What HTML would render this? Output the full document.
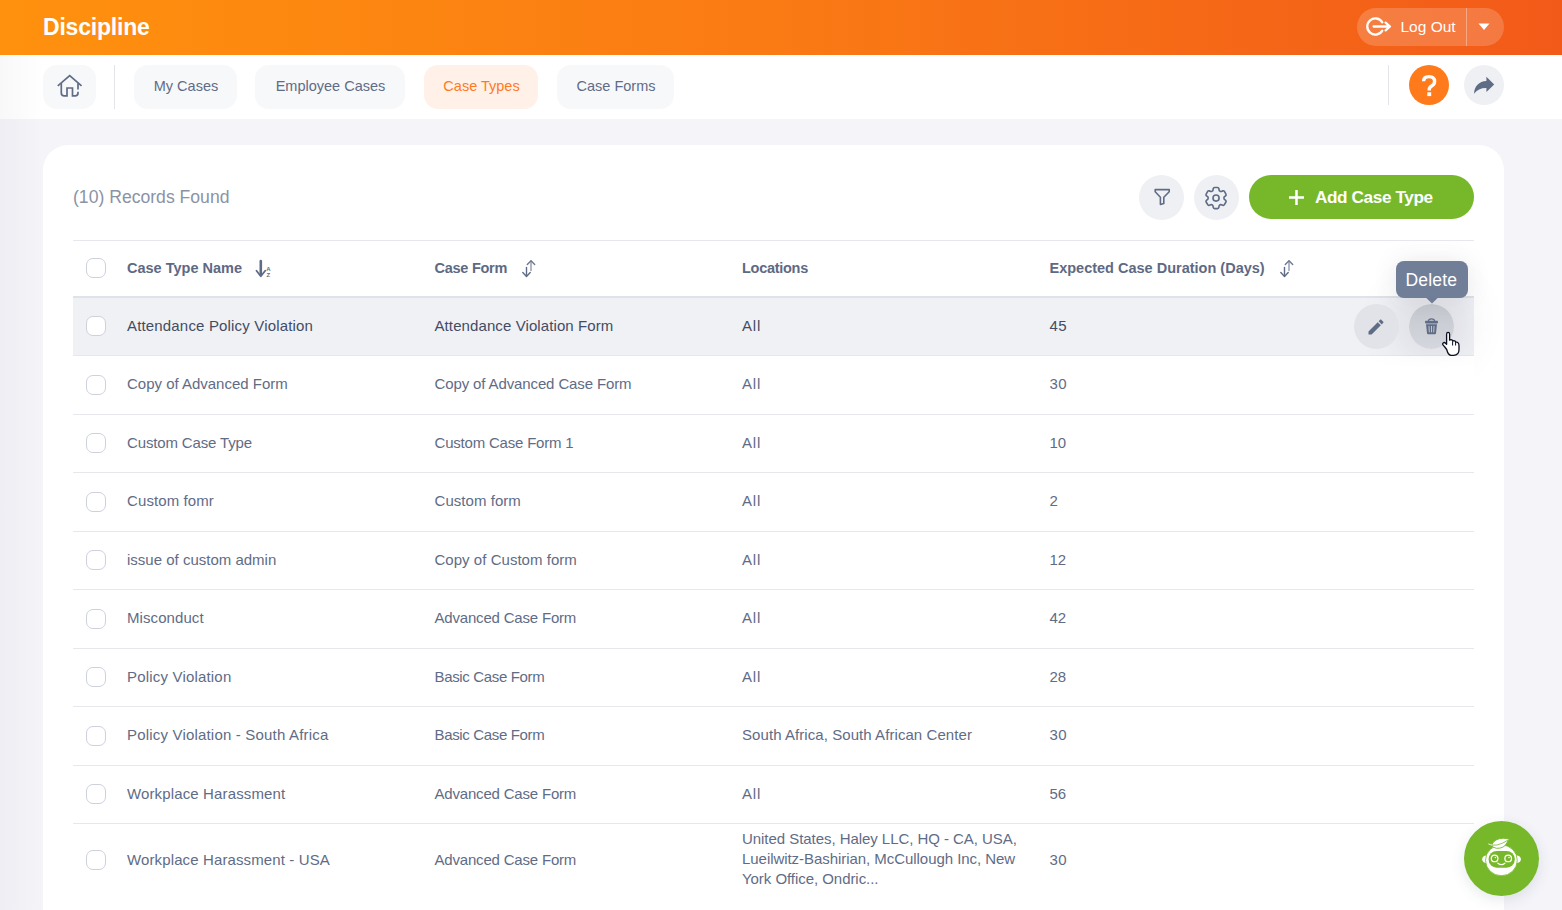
<!DOCTYPE html>
<html><head><meta charset="utf-8">
<style>
*{box-sizing:border-box;margin:0;padding:0}
html,body{width:1562px;height:910px;overflow:hidden}
body{background:#F4F4F9;font-family:"Liberation Sans",sans-serif;position:relative;color:#5F6C86}
.a{position:absolute}
#hdr{left:0;top:0;width:1562px;height:55px;background:linear-gradient(90deg,#FF910E 0%,#FA7A14 50%,#F25A19 100%)}
#title{left:43px;top:13px;font-size:23px;font-weight:bold;color:#fff;line-height:28px;letter-spacing:-0.2px}
#logout{left:1357px;top:8px;width:147px;height:38px;border-radius:19px;background:rgba(255,255,255,0.18)}
#nav{left:0;top:55px;width:1562px;height:64px;background:#fff}
.tab{top:65px;height:44px;border-radius:14px;background:#F7F8FA;font-size:14.5px;line-height:42px;text-indent:1px;color:#5F6C86;text-align:center}
.sep{width:1px;background:#E3E5EA}
.circ{border-radius:50%}
#card{left:43px;top:145px;width:1461px;height:800px;background:#fff;border-radius:25px}
.t{font-size:15px;line-height:20px;white-space:nowrap;letter-spacing:0.15px}
.h{font-weight:bold;color:#5E6983;letter-spacing:0}
.cb{width:20px;height:20px;border:1px solid #CDD1DC;border-radius:7px;background:#fff}
.rl{left:73px;width:1401px;height:1px;background:#E6E8EE}
</style></head><body>
<div id="hdr" class="a">
  <div id="title" class="a">Discipline</div>
  <div id="logout" class="a"></div>
  <div class="a" style="left:1466px;top:8px;width:1px;height:38px;background:rgba(255,255,255,0.35)"></div>
  <svg class="a" style="left:1360px;top:10px" width="40" height="34" viewBox="1360 10 40 34">
    <path d="M1382.3,22.3 A8.1,8.1 0 1 0 1382.3,30.7" fill="none" stroke="#fff" stroke-width="2.3" stroke-linecap="round"/>
    <path d="M1373.6,26.5 H1389.8 M1385.6,22.6 L1390,26.5 L1385.6,30.4" fill="none" stroke="#fff" stroke-width="2.3" stroke-linecap="round" stroke-linejoin="round"/>
  </svg>
  <div class="a" style="left:1400.5px;top:16.6px;font-size:15.5px;line-height:20px;color:#fff;white-space:nowrap">Log Out</div>
  <svg class="a" style="left:1476px;top:20px" width="16" height="12" viewBox="1476 20 16 12"><path d="M1478.5,23.5 H1489.5 L1484,30 Z" fill="#fff"/></svg>
</div>
<div id="nav" class="a"></div>
<div class="a" style="left:0;top:55px;width:44px;height:855px;background:linear-gradient(90deg,rgba(40,40,70,0.03),rgba(40,40,70,0) 100%)"></div>
<div class="a tab" style="left:43px;width:53px"></div>
<div class="a sep" style="left:114px;top:65px;height:44px"></div>
<div class="a tab" style="left:134px;width:103px">My Cases</div>
<div class="a tab" style="left:255px;width:150px">Employee Cases</div>
<div class="a tab" style="left:424px;width:114px;background:#FFF1E8;color:#FF7A22">Case Types</div>
<div class="a tab" style="left:557px;width:117px">Case Forms</div>
<div class="a sep" style="left:1388px;top:65px;height:40px"></div>
<div class="a circ" style="left:1409px;top:65px;width:40px;height:40px;background:#FF7A1A"></div>
<div class="a circ" style="left:1464px;top:65px;width:40px;height:40px;background:#EFF0F3"></div>

<div id="card" class="a"></div>
<div class="a" style="left:73px;top:186px;font-size:17.6px;line-height:22px;color:#8A93A5;white-space:nowrap">(10) Records Found</div>
<div class="a circ" style="left:1139px;top:175px;width:45px;height:45px;background:#EFF0F3"></div>
<div class="a circ" style="left:1194px;top:175px;width:45px;height:45px;background:#EFF0F3"></div>
<div class="a" style="left:1249px;top:175px;width:225px;height:44px;border-radius:22px;background:#76B82A"></div>

<div class="a rl" style="top:240px"></div>
<div class="a rl" style="top:296px;height:2px;background:#DFE2E8"></div>
<div class="a" style="left:73px;top:298px;width:1401px;height:57px;background:#F0F1F5"></div>
<div class="a rl" style="top:355px"></div>

<!-- table header -->
<div class="a cb" style="left:86px;top:258px"></div>
<div class="a t h" style="left:127px;top:258px;font-size:14.5px">Case Type Name</div>
<div class="a t h" style="left:434.5px;top:258px;font-size:14.5px;letter-spacing:-0.26px">Case Form</div>
<div class="a t h" style="left:742px;top:258px;font-size:14.5px;letter-spacing:-0.28px">Locations</div>
<div class="a t h" style="left:1049.5px;top:258px;font-size:14.5px">Expected Case Duration (Days)</div>

<!-- home icon -->
<svg class="a" style="left:50px;top:70px" width="40" height="34" viewBox="50 70 40 34">
  <path d="M58.4,85.4 L69.7,75.7 L80.9,85.4" fill="none" stroke="#5F6C86" stroke-width="1.7" stroke-linecap="square" stroke-linejoin="miter"/>
  <path d="M61.3,83.2 V93 Q61.3,95.9 64.2,95.9 H67 V88 H72.5 V95.9 H75.1 Q78,95.9 78,93 V91.8 M78,89.4 V83.2" fill="none" stroke="#5F6C86" stroke-width="1.7" stroke-linecap="butt" stroke-linejoin="miter"/>
</svg>
<!-- question -->
<svg class="a" style="left:1409px;top:65px" width="40" height="40" viewBox="1409 65 40 40">
  <path d="M1423.6,81.2 Q1423.6,76.6 1429,76.6 Q1434.6,76.6 1434.6,81.4 Q1434.6,84.2 1431.6,86 Q1429.2,87.5 1429.2,89.8 V90.6" fill="none" stroke="#fff" stroke-width="3.4" stroke-linecap="butt"/>
  <rect x="1427.3" y="92.3" width="3.9" height="3.8" fill="#fff"/>
</svg>
<!-- share -->
<svg class="a" style="left:1464px;top:65px" width="40" height="40" viewBox="1464 65 40 40">
  <path d="M1494.2,84.4 L1486.4,76.7 V81 C1479.2,81.3 1474.1,86.4 1474.1,93.7 C1476.8,89.8 1481,87.8 1486.4,87.9 V92.1 Z" fill="#5F6C86"/>
</svg>
<!-- filter -->
<svg class="a" style="left:1139px;top:175px" width="45" height="45" viewBox="1139 175 45 45">
  <path d="M1155.2,189.6 H1169.2 V191.8 L1163.8,197.2 V203.5 L1160.4,204.4 V197.2 L1155.2,191.8 Z" fill="none" stroke="#5F6C86" stroke-width="1.6" stroke-linejoin="round"/>
</svg>
<!-- gear -->
<svg class="a" style="left:1202px;top:184px" width="28.1" height="28.1" viewBox="0 0 24 24" fill="none" stroke="#5F6C86" stroke-width="1.4">
  <path d="M9.594 3.94c.09-.542.56-.94 1.11-.94h2.593c.55 0 1.02.398 1.11.94l.213 1.281c.063.374.313.686.645.87.074.04.147.083.22.127.325.196.72.257 1.075.124l1.217-.456a1.125 1.125 0 0 1 1.37.49l1.296 2.247a1.125 1.125 0 0 1-.26 1.431l-1.003.827c-.293.241-.438.613-.43.992a7.723 7.723 0 0 1 0 .255c-.008.378.137.75.43.991l1.004.827c.424.35.534.955.26 1.43l-1.298 2.247a1.125 1.125 0 0 1-1.369.491l-1.217-.456c-.355-.133-.75-.072-1.076.124a6.47 6.47 0 0 1-.22.128c-.331.183-.581.495-.644.869l-.213 1.281c-.09.543-.56.94-1.11.94h-2.594c-.55 0-1.019-.398-1.11-.94l-.213-1.281c-.062-.374-.312-.686-.644-.87a6.520 6.520 0 0 1-.22-.127c-.325-.196-.72-.257-1.076-.124l-1.217.456a1.125 1.125 0 0 1-1.369-.49l-1.297-2.247a1.125 1.125 0 0 1 .26-1.431l1.004-.827c.292-.24.437-.613.43-.991a6.932 6.932 0 0 1 0-.255c.007-.38-.138-.751-.43-.992l-1.004-.827a1.125 1.125 0 0 1-.26-1.430l1.297-2.247a1.125 1.125 0 0 1 1.370-.491l1.216.456c.356.133.751.072 1.076-.124.072-.044.146-.086.220-.128.332-.183.582-.495.644-.869l.214-1.280Z"/>
  <path d="M14.6 12a2.6 2.6 0 1 1-5.2 0 2.6 2.6 0 0 1 5.2 0Z"/>
</svg>
<!-- add button contents -->
<svg class="a" style="left:1285px;top:185px" width="24" height="24" viewBox="1285 185 24 24">
  <path d="M1296.5,190 V205 M1289,197.5 H1304" stroke="#fff" stroke-width="2.5" stroke-linecap="butt"/>
</svg>
<div class="a" style="left:1315px;top:185.4px;font-size:17.2px;line-height:24px;font-weight:bold;color:#fff;white-space:nowrap;letter-spacing:-0.4px">Add Case Type</div>

<!-- sort icons -->
<svg class="a" style="left:250px;top:255px" width="30" height="26" viewBox="250 255 30 26">
  <path d="M260.8,261 V275" stroke="#5F6C86" stroke-width="2.6" stroke-linecap="round"/>
  <path d="M256.5,270.8 L260.8,276.3 L265.2,270.8" fill="none" stroke="#5F6C86" stroke-width="1.8" stroke-linecap="round" stroke-linejoin="round"/>
  <text x="266.3" y="271.2" font-family="Liberation Sans" font-weight="bold" font-size="6" fill="#5F6C86">A</text>
  <text x="266.6" y="277" font-family="Liberation Sans" font-weight="bold" font-size="6" fill="#5F6C86">Z</text>
</svg>
<svg class="a" style="left:515.0px;top:255px" width="26" height="26" viewBox="515.0 255 26 26">
  <g transform="translate(0.0,0)">
  <path d="M526.5,267.5 V276" stroke="#5F6C86" stroke-width="1.4" stroke-linecap="round"/>
  <path d="M522.8,272.6 L526.5,276.4 L530.2,272.6" fill="none" stroke="#5F6C86" stroke-width="1.4" stroke-linecap="round" stroke-linejoin="round"/>
  <path d="M531,261 V270.5" stroke="#8F99AE" stroke-width="1.4" stroke-linecap="round"/>
  <path d="M527.3,264.6 L531,260.8 L534.7,264.6" fill="none" stroke="#6F7A92" stroke-width="1.4" stroke-linecap="round" stroke-linejoin="round"/>
  </g></svg>
<svg class="a" style="left:1272.5px;top:255px" width="26" height="26" viewBox="1272.5 255 26 26">
  <g transform="translate(757.5,0)">
  <path d="M526.5,267.5 V276" stroke="#5F6C86" stroke-width="1.4" stroke-linecap="round"/>
  <path d="M522.8,272.6 L526.5,276.4 L530.2,272.6" fill="none" stroke="#5F6C86" stroke-width="1.4" stroke-linecap="round" stroke-linejoin="round"/>
  <path d="M531,261 V270.5" stroke="#8F99AE" stroke-width="1.4" stroke-linecap="round"/>
  <path d="M527.3,264.6 L531,260.8 L534.7,264.6" fill="none" stroke="#6F7A92" stroke-width="1.4" stroke-linecap="round" stroke-linejoin="round"/>
  </g></svg>
<div class="a cb" style="left:86px;top:316.0px"></div>
<div class="a t" style="left:127px;top:315.9px;color:#424C63;letter-spacing:0.166px">Attendance Policy Violation</div>
<div class="a t" style="left:434.5px;top:315.9px;color:#424C63;letter-spacing:0.099px">Attendance Violation Form</div>
<div class="a t" style="left:742px;top:315.9px;color:#424C63;letter-spacing:0.815px">All</div>
<div class="a t" style="left:1049.5px;top:315.9px;color:#424C63;letter-spacing:0.306px">45</div>
<div class="a cb" style="left:86px;top:374.5px"></div>
<div class="a t" style="left:127px;top:374.4px;color:#5F6C86;letter-spacing:-0.011px">Copy of Advanced Form</div>
<div class="a t" style="left:434.5px;top:374.4px;color:#5F6C86;letter-spacing:-0.12px">Copy of Advanced Case Form</div>
<div class="a t" style="left:742px;top:374.4px;color:#5F6C86;letter-spacing:0.815px">All</div>
<div class="a t" style="left:1049.5px;top:374.4px;color:#5F6C86;letter-spacing:0.306px">30</div>
<div class="a rl" style="top:414px"></div>
<div class="a cb" style="left:86px;top:433.0px"></div>
<div class="a t" style="left:127px;top:432.9px;color:#5F6C86;letter-spacing:-0.144px">Custom Case Type</div>
<div class="a t" style="left:434.5px;top:432.9px;color:#5F6C86;letter-spacing:-0.198px">Custom Case Form 1</div>
<div class="a t" style="left:742px;top:432.9px;color:#5F6C86;letter-spacing:0.815px">All</div>
<div class="a t" style="left:1049.5px;top:432.9px;color:#5F6C86;letter-spacing:0px">10</div>
<div class="a rl" style="top:472px"></div>
<div class="a cb" style="left:86px;top:491.5px"></div>
<div class="a t" style="left:127px;top:491.4px;color:#5F6C86;letter-spacing:0.102px">Custom fomr</div>
<div class="a t" style="left:434.5px;top:491.4px;color:#5F6C86;letter-spacing:0.048px">Custom form</div>
<div class="a t" style="left:742px;top:491.4px;color:#5F6C86;letter-spacing:0.815px">All</div>
<div class="a t" style="left:1049.5px;top:491.4px;color:#5F6C86;letter-spacing:0px">2</div>
<div class="a rl" style="top:531px"></div>
<div class="a cb" style="left:86px;top:550.0px"></div>
<div class="a t" style="left:127px;top:549.9px;color:#5F6C86;letter-spacing:0.002px">issue of custom admin</div>
<div class="a t" style="left:434.5px;top:549.9px;color:#5F6C86;letter-spacing:0.034px">Copy of Custom form</div>
<div class="a t" style="left:742px;top:549.9px;color:#5F6C86;letter-spacing:0.815px">All</div>
<div class="a t" style="left:1049.5px;top:549.9px;color:#5F6C86;letter-spacing:0px">12</div>
<div class="a rl" style="top:589px"></div>
<div class="a cb" style="left:86px;top:608.5px"></div>
<div class="a t" style="left:127px;top:608.4px;color:#5F6C86;letter-spacing:0.083px">Misconduct</div>
<div class="a t" style="left:434.5px;top:608.4px;color:#5F6C86;letter-spacing:-0.188px">Advanced Case Form</div>
<div class="a t" style="left:742px;top:608.4px;color:#5F6C86;letter-spacing:0.815px">All</div>
<div class="a t" style="left:1049.5px;top:608.4px;color:#5F6C86;letter-spacing:0px">42</div>
<div class="a rl" style="top:648px"></div>
<div class="a cb" style="left:86px;top:667.0px"></div>
<div class="a t" style="left:127px;top:666.9px;color:#5F6C86;letter-spacing:0.185px">Policy Violation</div>
<div class="a t" style="left:434.5px;top:666.9px;color:#5F6C86;letter-spacing:-0.342px">Basic Case Form</div>
<div class="a t" style="left:742px;top:666.9px;color:#5F6C86;letter-spacing:0.815px">All</div>
<div class="a t" style="left:1049.5px;top:666.9px;color:#5F6C86;letter-spacing:0px">28</div>
<div class="a rl" style="top:706px"></div>
<div class="a cb" style="left:86px;top:725.5px"></div>
<div class="a t" style="left:127px;top:725.4px;color:#5F6C86;letter-spacing:0.188px">Policy Violation - South Africa</div>
<div class="a t" style="left:434.5px;top:725.4px;color:#5F6C86;letter-spacing:-0.342px">Basic Case Form</div>
<div class="a t" style="left:742px;top:725.4px;color:#5F6C86;letter-spacing:0.068px">South Africa, South African Center</div>
<div class="a t" style="left:1049.5px;top:725.4px;color:#5F6C86;letter-spacing:0.306px">30</div>
<div class="a rl" style="top:765px"></div>
<div class="a cb" style="left:86px;top:784.0px"></div>
<div class="a t" style="left:127px;top:783.9px;color:#5F6C86;letter-spacing:0.133px">Workplace Harassment</div>
<div class="a t" style="left:434.5px;top:783.9px;color:#5F6C86;letter-spacing:-0.188px">Advanced Case Form</div>
<div class="a t" style="left:742px;top:783.9px;color:#5F6C86;letter-spacing:0.815px">All</div>
<div class="a t" style="left:1049.5px;top:783.9px;color:#5F6C86;letter-spacing:0px">56</div>
<div class="a rl" style="top:823px"></div>
<div class="a cb" style="left:86px;top:850.3px"></div>
<div class="a t" style="left:127px;top:849.5999999999999px;color:#5F6C86;letter-spacing:0.123px">Workplace Harassment - USA</div>
<div class="a t" style="left:434.5px;top:849.5999999999999px;color:#5F6C86;letter-spacing:-0.188px">Advanced Case Form</div>
<div class="a t" style="left:742px;top:829.4px;color:#5F6C86;letter-spacing:-0.05px">United States, Haley LLC, HQ - CA, USA,<br>Lueilwitz-Bashirian, McCullough Inc, New<br>York Office, Ondric...</div>
<div class="a t" style="left:1049.5px;top:849.5999999999999px;color:#5F6C86;letter-spacing:0.306px">30</div>
<!-- action buttons -->
<div class="a circ" style="left:1409px;top:304px;width:45px;height:45px;box-shadow:0 -4px 44px 10px rgba(70,75,95,0.15)"></div>
<div class="a" style="left:1280px;top:356px;width:194px;height:57px;background:linear-gradient(180deg,rgba(255,255,255,0.55) 0px,#fff 14px)"></div>
<div class="a circ" style="left:1354px;top:304px;width:45px;height:45px;background:#E1E3E8"></div>
<div class="a circ" style="left:1409px;top:304px;width:45px;height:45px;background:linear-gradient(180deg,#C4C7CD,#D4D7DD)"></div>
<svg class="a" style="left:1366.4px;top:316.6px" width="20" height="20" viewBox="0 0 24 24">
  <path d="M20.71,7.04C21.1,6.65 21.1,6 20.71,5.63L18.37,3.29C18,2.9 17.35,2.9 16.96,3.29L15.12,5.12L18.87,8.87M3,17.25V21H6.75L17.81,9.93L14.06,6.18L3,17.25Z" fill="#5F6C86"/>
</svg>
<svg class="a" style="left:1420px;top:315px" width="24" height="24" viewBox="1420 315 24 24">
  <path d="M1428.3,321 Q1428.6,318.9 1431.5,318.9 Q1434.4,318.9 1434.7,321" fill="none" stroke="#5F6C86" stroke-width="1.2"/>
  <rect x="1425" y="320.8" width="13" height="2.6" rx="0.8" fill="#5F6C86"/>
  <path d="M1426,324.3 H1437 L1436,333.2 Q1435.9,334.2 1434.9,334.2 H1428.1 Q1427.1,334.2 1427,333.2 Z" fill="#5F6C86"/>
  <path d="M1429,326 L1429.3,332.3 M1431.5,326 V332.3 M1434,326 L1433.7,332.3" stroke="#CBCED5" stroke-width="0.9"/>
</svg>
<!-- tooltip -->
<div class="a" style="left:1396px;top:261px;width:72px;height:37px;border-radius:8px;background:#717E98;box-shadow:0 0 24px rgba(60,70,90,0.10)"></div>
<svg class="a" style="left:1420px;top:297px" width="22" height="10" viewBox="1420 297 22 10"><path d="M1425.8,297.5 H1438.2 L1432,303.6 Z" fill="#6F7C96"/></svg>
<div class="a" style="left:1405.5px;top:268.5px;font-size:17.5px;line-height:22px;color:#fff;white-space:nowrap;letter-spacing:0.2px">Delete</div>
<!-- cursor -->
<svg class="a" style="left:1438px;top:330px" width="26" height="28" viewBox="1438 330 26 28">
  <path d="M1445.2,347.5 L1443.4,345.4 Q1442,344 1443.2,342.9 Q1444.4,342 1445.6,343.2 L1446.6,344.3 V334.2 Q1446.6,332.4 1448.1,332.4 Q1449.6,332.4 1449.6,334.2 V340.2 Q1450.6,339.3 1451.8,339.8 Q1452.6,340.3 1452.7,341.2 Q1453.8,340.3 1455,341 Q1455.6,341.5 1455.7,342.3 Q1456.8,341.7 1457.8,342.5 Q1459,343.4 1459,345.5 V349.5 Q1459,355.3 1453.6,355.3 H1451.2 Q1448.2,355.3 1446.7,349.5 Z" fill="#fff" stroke="#0B1020" stroke-width="1.3" stroke-linejoin="round"/>
  <path d="M1452.6,341.5 V345.5 M1455.6,342.5 V345.5" stroke="#0B1020" stroke-width="1"/>
</svg>

<!-- robot -->
<div class="a circ" style="left:1464px;top:821px;width:75px;height:75px;background:#76B82A;box-shadow:0 4px 14px rgba(60,70,90,0.12)"></div>
<svg class="a" style="left:1464px;top:821px" width="75" height="75" viewBox="1464 821 75 75">
  <path d="M1486.8,855.2 Q1482.2,855.8 1482.2,859.2 Q1482.2,862.6 1486.8,863.2 Z" fill="#fff"/>
  <path d="M1516,855.2 Q1520.9,855.8 1520.9,859.2 Q1520.9,862.6 1516,863.2 Z" fill="#fff"/>
  <ellipse cx="1501.4" cy="860.3" rx="15.9" ry="15.4" fill="#fff" stroke="#76B82A" stroke-width="0.8"/>
  <rect x="1488.6" y="850.9" width="26.2" height="16.8" rx="8.2" fill="#76B82A"/>
  <circle cx="1494.6" cy="858.4" r="3.3" fill="none" stroke="#fff" stroke-width="1.3"/>
  <circle cx="1508.2" cy="858.4" r="3.3" fill="none" stroke="#fff" stroke-width="1.3"/>
  <circle cx="1495.4" cy="857.5" r="0.75" fill="#fff"/>
  <circle cx="1509" cy="857.5" r="0.75" fill="#fff"/>
  <path d="M1497.9,863.2 Q1501.4,866 1504.9,863.2" fill="none" stroke="#fff" stroke-width="1.3" stroke-linecap="round"/>
  <path d="M1491.5,845.2 Q1494.5,838.2 1503.5,838.3 Q1507.5,838.4 1509.4,839.4 Q1507.8,840.6 1506.8,843 Q1504.2,848.6 1496.5,848.3 Q1493.5,848 1491.5,845.2 Z" fill="#fff" stroke="#76B82A" stroke-width="0.9"/>
  <path d="M1488.4,843.9 Q1492,845.8 1497,845 Q1503,843.5 1508.2,840" fill="none" stroke="#76B82A" stroke-width="0.8"/>
  <path d="M1488.4,843.9 Q1490.5,844.8 1492,845" fill="none" stroke="#fff" stroke-width="0.9"/>
</svg>

</body></html>
